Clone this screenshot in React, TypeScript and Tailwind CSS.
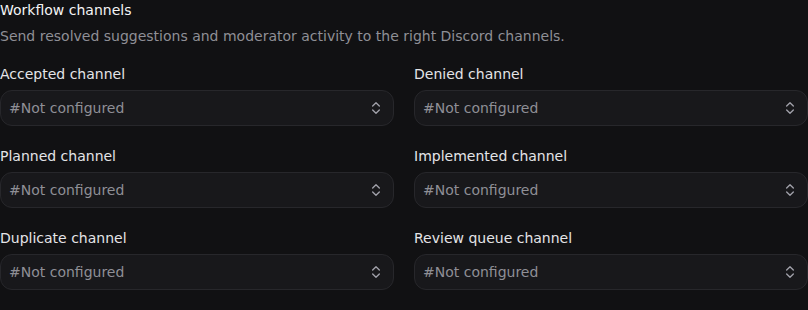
import React from "react";

const Chevrons = () => (
  <svg width="16" height="16" viewBox="0 0 24 24" fill="none" stroke="currentColor" strokeWidth="2" strokeLinecap="round" strokeLinejoin="round">
    <path d="m7 15 5 5 5-5" />
    <path d="m7 9 5-5 5 5" />
  </svg>
);

const Field = ({ label }: { label: string }) => (
  <div className="flex flex-col">
    <div className="text-[14px] leading-[20px] text-[#e4e4e7] mb-[6px]">{label}</div>
    <div className="h-[36px] rounded-[12px] border border-[#27272b] bg-[#18181b] flex items-center justify-between pl-[8px] pr-[9px]">
      <span className="text-[14px] text-[#8f8f96]">#Not configured</span>
      <span className="text-[#a1a1aa] flex"><Chevrons /></span>
    </div>
  </div>
);

export default function App() {
  const labels = [
    "Accepted channel",
    "Denied channel",
    "Planned channel",
    "Implemented channel",
    "Duplicate channel",
    "Review queue channel",
  ];
  return (
    <div className="w-[808px] h-[310px] bg-[#111113] overflow-hidden" style={{ fontFamily: '"DejaVu Sans", sans-serif' }}>
      <div className="text-[14px] leading-[20px] text-[#f4f4f5]">Workflow channels</div>
      <div className="text-[14px] leading-[20px] text-[#8f8f96] mt-[6px]">
        Send resolved suggestions and moderator activity to the right Discord channels.
      </div>
      <div className="grid grid-cols-2 gap-x-[20px] gap-y-[20px] mt-[18px]">
        {labels.map((l) => (
          <Field key={l} label={l} />
        ))}
      </div>
    </div>
  );
}
